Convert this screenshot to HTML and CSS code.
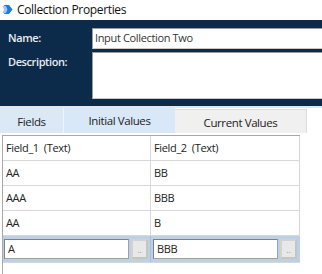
FILE: index.html
```html
<!DOCTYPE html>
<html>
<head>
<meta charset="utf-8">
<link rel="stylesheet" href="styles.css">
</head>
<body>
<div class="window">
  <div class="titlebar">
    <svg class="appicon" width="11" height="11" viewBox="0 0 11 11">
      <polygon points="2,1 7,1 10.5,5.5 7,10 2,10 4,5.5" fill="#1f7ad1"/>
      <polygon points="0.5,2 4,2 5.5,5.5 4,9 0.5,9 2,5.5" fill="#9cc8f0"/>
    </svg>
    <span class="title">Collection Properties</span>
  </div>
  <div class="props">
    <div class="prop-row name-row">
      <label class="prop-label">Name:</label>
      <div class="field name-field">Input Collection Two</div>
    </div>
    <div class="prop-row desc-row">
      <label class="prop-label">Description:</label>
      <div class="field desc-field"></div>
    </div>
  </div>
  <div class="strip"></div>
  <div class="tabs">
    <div class="tab tab-fields">Fields</div>
    <div class="tab tab-initial">Initial Values</div>
    <div class="tab tab-current">Current Values</div>
  </div>
  <div class="grid-wrap">
    <div class="grid">
      <div class="row header">
        <div class="cell c1">Field_1&nbsp; (Text)</div>
        <div class="cell c2">Field_2&nbsp; (Text)</div>
      </div>
      <div class="row">
        <div class="cell c1">AA</div>
        <div class="cell c2">BB</div>
      </div>
      <div class="row">
        <div class="cell c1">AAA</div>
        <div class="cell c2">BBB</div>
      </div>
      <div class="row">
        <div class="cell c1">AA</div>
        <div class="cell c2">B</div>
      </div>
      <div class="row edit">
        <div class="edit-cell e1">
          <div class="edit-input">A</div>
          <div class="edit-btn">..</div>
        </div>
        <div class="edit-cell e2">
          <div class="edit-input">BBB</div>
          <div class="edit-btn">..</div>
        </div>
      </div>
    </div>
  </div>
</div>
</body>
</html>
```
FILE: styles.css
```css
html, body {
  margin: 0;
  padding: 0;
  background: #ffffff;
}
body {
  width: 322px;
  height: 274px;
  overflow: hidden;
  font-family: "Open Sans", "Noto Sans", "Liberation Sans", sans-serif;
  color: #222;
}
.window {
  display: flex;
  flex-direction: column;
  height: 274px;
}
.titlebar {
  height: 20px;
  display: flex;
  align-items: center;
  padding-left: 2px;
  gap: 4px;
  box-sizing: border-box;
  padding-bottom: 2px;
}
.appicon { display: block; }
.title {
  font-size: 12px;
  color: #111;
  letter-spacing: -0.35px;
}
.props {
  background: #0c2a4a;
  height: 86px;
  box-sizing: border-box;
  padding-top: 8px;
  display: flex;
  flex-direction: column;
  gap: 3px;
}
.prop-row {
  display: grid;
  grid-template-columns: 92px 1fr;
}
.prop-label {
  color: #e8ecf0;
  font-size: 11px;
  font-weight: 600;
  padding-left: 8px;
  letter-spacing: -0.4px;
}
.name-row .prop-label { line-height: 20px; }
.desc-row .prop-label { line-height: 20px; }
.field {
  background: #fff;
  border-top: 1px solid #9a9a9a;
  border-left: 1px solid #9a9a9a;
  border-bottom: 1px solid #c8c8c8;
  box-sizing: border-box;
  font-size: 11px;
  color: #333;
  padding-left: 2px;
  letter-spacing: -0.35px;
}
.name-field {
  height: 21px;
  line-height: 18px;
}
.desc-field { height: 47px; }
.strip {
  height: 2px;
  background: #e4e6e9;
}
.tabs {
  height: 25px;
  display: flex;
  align-items: stretch;
}
.tab {
  font-size: 11.5px;
  color: #222;
  display: flex;
  align-items: center;
  justify-content: center;
  box-sizing: border-box;
  letter-spacing: -0.4px;
}
.tab-fields {
  width: 64px;
  background: #dbe8f6;
  border-right: 1px solid #eef4fb;
  padding-top: 2px;
}
.tab-initial {
  width: 111px;
  background: #d9e8f8;
  padding-top: 0;
}
.tab-current {
  width: 132px;
  background: #f0f0f0;
  border-top: 1px solid #dcdcdc;
  border-right: 1px solid #dcdcdc;
  margin-top: 1px;
  padding-top: 2px;
}
.grid-wrap {
  flex: 1;
  padding-top: 2px;
  padding-left: 2px;
}
.grid {
  height: 100%;
  width: 298px;
  border-left: 1px solid #a8a8a8;
  border-top: 1px solid #a8a8a8;
  box-sizing: border-box;
}
.row {
  display: grid;
  grid-template-columns: 148px 149px;
  height: 25px;
  border-bottom: 1px solid #d8d8d8;
  box-sizing: border-box;
}
.row.header { height: 25px; }
.cell {
  font-size: 11px;
  line-height: 24px;
  padding-left: 3px;
  color: #222;
  letter-spacing: -0.35px;
}
.cell.c1 { border-right: 1px solid #d8d8d8; }
.cell.c2 { border-right: 1px solid #d8d8d8; }
.row.edit {
  height: 27px;
  background: #bcd0e8;
  border-bottom: 1px solid #d8d8d8;
  align-items: center;
}
.edit-cell {
  display: flex;
  align-items: center;
  gap: 2px;
  height: 100%;
}
.e1 { padding-left: 1px; border-right: 1px solid #a9bdd6; }
.e2 { padding-left: 2px; }
.e1 .edit-input { width: 125px; }
.e2 .edit-input { width: 125px; }
.edit-input {
  height: 20px;
  box-sizing: border-box;
  background: #fff;
  border: 1px solid #808080;
  border-right-color: #a0a0a0;
  border-bottom-color: #a0a0a0;
  font-size: 11px;
  line-height: 18px;
  padding-left: 3px;
  color: #222;
  letter-spacing: -0.35px;
}
.edit-btn {
  width: 17px;
  height: 20px;
  box-sizing: border-box;
  background: #e8e8e8;
  border: 2px solid #d2d2d2;
  border-right-color: #c4c4c4;
  border-bottom-color: #c4c4c4;
  font-size: 9px;
  color: #9a9ab0;
  text-align: center;
  line-height: 18px;
  letter-spacing: 0;
}
```
